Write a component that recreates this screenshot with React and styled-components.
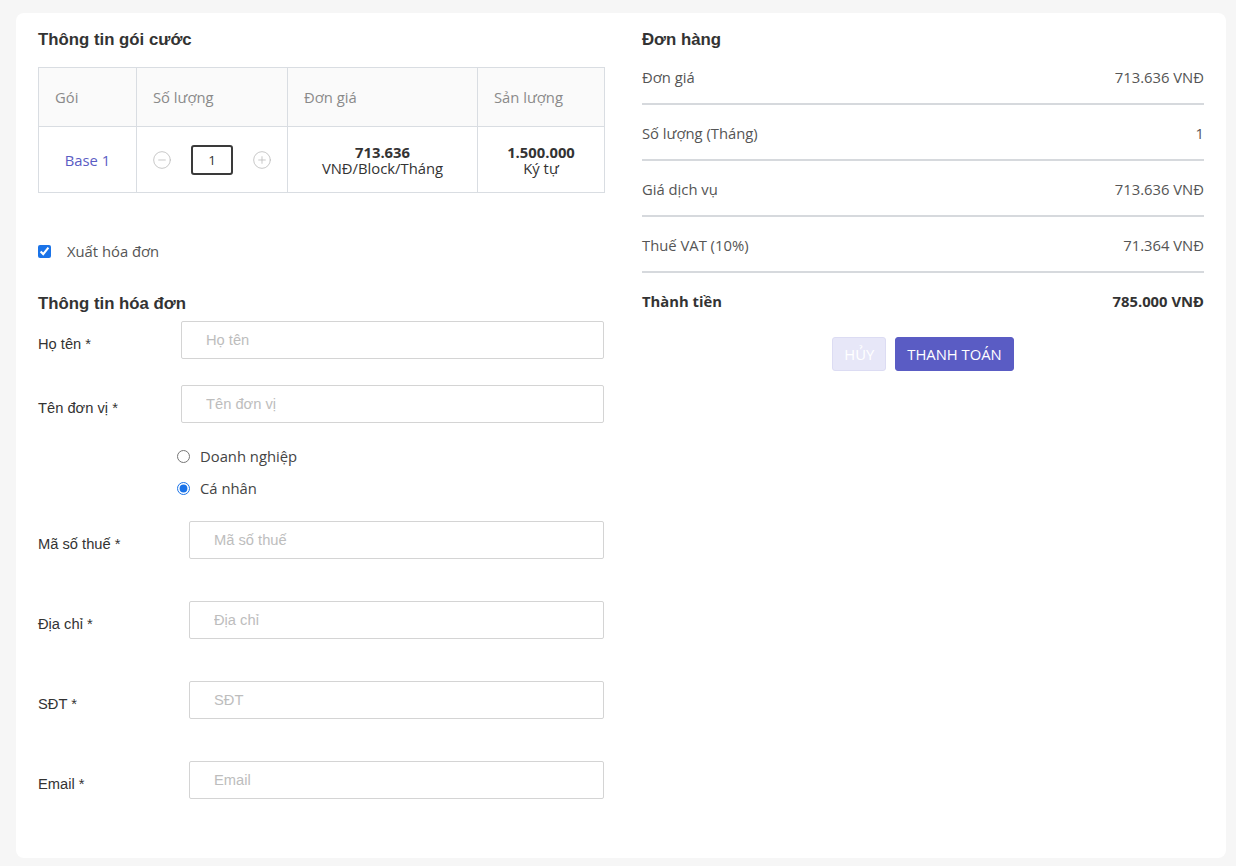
import React from "react";
import styled, { createGlobalStyle } from "styled-components";
import { CircleMinus, CirclePlus } from "lucide-react";

const GlobalStyle = createGlobalStyle`
  html, body {
    margin: 0;
    padding: 0;
    background: #f6f6f6;
  }
  * {
    box-sizing: border-box;
  }
`;

const orderRows = [
  { label: "Đơn giá", value: "713.636 VNĐ" },
  { label: "Số lượng (Tháng)", value: "1" },
  { label: "Giá dịch vụ", value: "713.636 VNĐ" },
  { label: "Thuế VAT (10%)", value: "71.364 VNĐ" },
];

const lowerFields = ["Mã số thuế", "Địa chỉ", "SĐT", "Email"];

const App = () => {
  return (
    <Page>
      <GlobalStyle />
      <Card>
        <Column>
          <Heading>Thông tin gói cước</Heading>
          <Table>
            <thead>
              <tr>
                <Th $w={98}>Gói</Th>
                <Th $w={151}>Số lượng</Th>
                <Th $w={190}>Đơn giá</Th>
                <Th $w={127}>Sản lượng</Th>
              </tr>
            </thead>
            <tbody>
              <tr>
                <Td>
                  <PlanName>Base 1</PlanName>
                </Td>
                <Td>
                  <Stepper>
                    <StepIcon as={CircleMinus} size={20} strokeWidth={1} />
                    <QtyBox>1</QtyBox>
                    <StepIcon as={CirclePlus} size={20} strokeWidth={1} />
                  </Stepper>
                </Td>
                <Td>
                  <Strong>713.636</Strong>
                  <div>VNĐ/Block/Tháng</div>
                </Td>
                <Td>
                  <Strong>1.500.000</Strong>
                  <div>Ký tự</div>
                </Td>
              </tr>
            </tbody>
          </Table>

          <CheckRow>
            <CheckBox type="checkbox" defaultChecked />
            <CheckText>Xuất hóa đơn</CheckText>
          </CheckRow>

          <Heading $top={34}>Thông tin hóa đơn</Heading>

          <FormRow $top={8}>
            <Label $w={143}>Họ tên *</Label>
            <TextInput placeholder="Họ tên" />
          </FormRow>
          <FormRow $top={26}>
            <Label $w={143}>Tên đơn vị *</Label>
            <TextInput placeholder="Tên đơn vị" />
          </FormRow>

          <RadioGroup>
            <RadioLine>
              <Radio type="radio" name="kind" />
              <RadioText>Doanh nghiệp</RadioText>
            </RadioLine>
            <RadioLine>
              <Radio type="radio" name="kind" defaultChecked />
              <RadioText>Cá nhân</RadioText>
            </RadioLine>
          </RadioGroup>

          {lowerFields.map((f, i) => (
            <FormRow key={f} $top={i === 0 ? 23 : 42}>
              <Label $w={151}>{f} *</Label>
              <TextInput placeholder={f} />
            </FormRow>
          ))}
        </Column>

        <Column>
          <Heading>Đơn hàng</Heading>
          {orderRows.map((r) => (
            <OrderRow key={r.label}>
              <span>{r.label}</span>
              <span>{r.value}</span>
            </OrderRow>
          ))}
          <OrderRow $total>
            <span>Thành tiền</span>
            <span>785.000 VNĐ</span>
          </OrderRow>
          <Actions>
            <Button $ghost>HỦY</Button>
            <Button>THANH TOÁN</Button>
          </Actions>
        </Column>
      </Card>
    </Page>
  );
};

export default App;

const Page = styled.div`
  padding: 13px 10px 8px 16px;
  min-height: 866px;
`;

const Card = styled.div`
  background: #fff;
  border-radius: 8px;
  padding: 18px 22px 59px 22px;
  display: grid;
  grid-template-columns: 566px 1fr;
  column-gap: 38px;
  align-items: start;
`;

const Column = styled.div`
  display: flex;
  flex-direction: column;
`;

const Heading = styled.h2`
  margin: ${(p) => p.$top || 0}px 0 0 0;
  font-family: Arial, "Liberation Sans", sans-serif;
  font-size: 16.8px;
  line-height: 18px;
  font-weight: 700;
  color: #333;
`;

const Table = styled.table`
  margin-top: 18px;
  width: 566px;
  border-collapse: collapse;
  font-family: "Open Sans", sans-serif;
  font-size: 14.8px;
  color: #333;
  table-layout: fixed;
`;

const Th = styled.th`
  width: ${(p) => p.$w}px;
  height: 59px;
  padding: 0 16px;
  text-align: left;
  font-weight: 400;
  color: #8a8a8a;
  background: #fafafa;
  border: 1px solid #d9dde2;
`;

const Td = styled.td`
  height: 66px;
  padding: 0;
  text-align: center;
  vertical-align: middle;
  border: 1px solid #d9dde2;
  line-height: 16px;
`;

const PlanName = styled.span`
  color: #5a5cc4;
`;

const Strong = styled.div`
  font-weight: 700;
`;

const Stepper = styled.div`
  display: flex;
  align-items: center;
  justify-content: center;
  gap: 19px;
`;

const StepIcon = styled.svg`
  color: #bdbdbd;
  flex: none;
`;

const QtyBox = styled.div`
  width: 42px;
  height: 30px;
  border: 2px solid #3a3a3a;
  border-radius: 3px;
  display: flex;
  align-items: center;
  justify-content: center;
  font-size: 13.5px;
  color: #333;
`;

const CheckRow = styled.label`
  margin-top: 48px;
  display: flex;
  align-items: center;
  height: 20px;
  gap: 16px;
`;

const CheckBox = styled.input`
  margin: 0;
  width: 13px;
  height: 13px;
  accent-color: #1a73e8;
`;

const CheckText = styled.span`
  font-family: "Open Sans", sans-serif;
  font-size: 14.8px;
  color: #555;
`;

const FormRow = styled.div`
  margin-top: ${(p) => p.$top}px;
  display: flex;
  align-items: center;
`;

const Label = styled.label`
  width: ${(p) => p.$w}px;
  flex: none;
  padding-top: 8px;
  font-family: Arial, "Liberation Sans", sans-serif;
  font-size: 14.7px;
  color: #333;
`;

const TextInput = styled.input`
  flex: 1;
  height: 38px;
  border: 1px solid #d4d4d4;
  border-radius: 2px;
  padding: 0 24px;
  font-family: Arial, "Liberation Sans", sans-serif;
  font-size: 14.7px;
  color: #333;
  outline: none;
  &::placeholder {
    color: #bdbdbd;
  }
`;

const RadioGroup = styled.div`
  margin-top: 23px;
  padding-left: 139px;
  display: flex;
  flex-direction: column;
  gap: 12px;
`;

const RadioLine = styled.label`
  display: flex;
  align-items: center;
  height: 20px;
  gap: 10px;
`;

const Radio = styled.input`
  margin: 0;
  width: 13px;
  height: 13px;
  accent-color: #1a73e8;
`;

const RadioText = styled.span`
  font-family: "Open Sans", sans-serif;
  font-size: 14.8px;
  color: #444;
`;

const OrderRow = styled.div`
  display: flex;
  justify-content: space-between;
  padding: 18px 0 16px;
  line-height: 20px;
  font-family: "Open Sans", sans-serif;
  font-size: 14.8px;
  color: ${(p) => (p.$total ? "#333" : "#555")};
  font-weight: ${(p) => (p.$total ? 700 : 400)};
  border-bottom: ${(p) => (p.$total ? "none" : "2px solid #d6d9dd")};
`;

const Actions = styled.div`
  margin-top: 10px;
  display: flex;
  justify-content: center;
  gap: 9px;
`;

const Button = styled.button`
  height: 34px;
  padding: 0 11px;
  border-radius: 3px;
  border: 1px solid ${(p) => (p.$ghost ? "#dcdcf3" : "#5a5cc4")};
  background: ${(p) => (p.$ghost ? "#e7e7f8" : "#5a5cc4")};
  color: #fff;
  font-family: "Open Sans", sans-serif;
  font-size: 14.8px;
`;
